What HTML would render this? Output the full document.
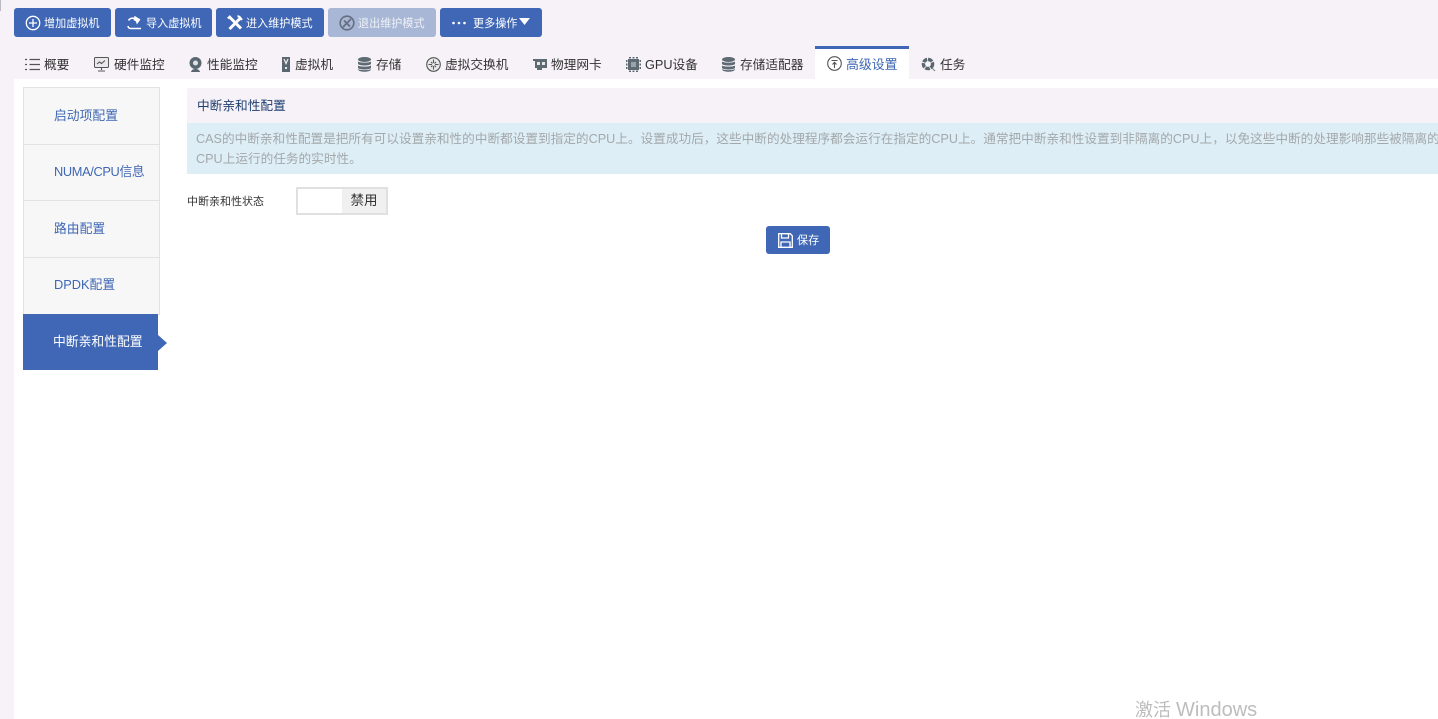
<!DOCTYPE html>
<html lang="zh"><head><meta charset="utf-8"><title>高级设置</title>
<style>
*{box-sizing:border-box}
html{margin:0;padding:0;width:1438px;height:719px;overflow:hidden;background:#fff}
body{margin:0;padding:0;position:relative;width:1438px;height:719px;overflow:hidden;background:#f6f2f7;font:12px/16px "Liberation Sans","Noto Sans CJK SC",sans-serif;color:#333}
.a{position:absolute;white-space:nowrap}
.btn{position:absolute;top:8px;height:29px;background:#3f67b5;border-radius:3px}
.btn span{position:absolute;top:8px;color:#fff;font-size:11.1px;line-height:16px;white-space:nowrap}
svg{position:absolute;overflow:visible}
.tab{position:absolute;top:57px;font-size:12.7px;line-height:17px;color:#333;white-space:nowrap}
.nav{position:absolute;left:23px;width:137px;background:#f7f7f7;border:1px solid #e3e3e3;color:#3f67b5;font-size:12.8px}
.nav span{position:absolute;left:30px;white-space:nowrap}
</style></head><body>
<div class="a" style="left:0;top:0;width:1px;height:11px;background:#b9b9c4"></div>

<div class="btn" style="left:14px;width:97px">
<svg style="left:11px;top:7px" width="16" height="16" viewBox="0 0 16 16" fill="none" stroke="#fff" stroke-width="1.3"><circle cx="8" cy="8" r="6.7"/><path d="M8 4v8M4 8h8"/></svg>
<span style="left:30px">增加虚拟机</span></div>
<div class="btn" style="left:115px;width:97px">
<svg style="left:12px;top:7px" width="16" height="16" viewBox="0 0 16 16" fill="none" stroke="#fff" stroke-width="1.6"><path d="M1 11c.4 1.800 1 2.500 2.500 2.500H14"/><path d="M1.500 5.500C3 3 6 2.500 8.500 4"/><path d="M7.500 .8l6 3.700-3.700 5-.8-3L6.500 5z" fill="#fff" stroke="none"/></svg>
<span style="left:31px">导入虚拟机</span></div>
<div class="btn" style="left:216px;width:108px">
<svg style="left:11px;top:7px" width="16" height="16" viewBox="0 0 16 16" fill="none" stroke="#fff"><path d="M2.500 14L13 3.500" stroke-width="3"/><path d="M3 2.500L14 13.500" stroke-width="3"/><path d="M.8 3.500L3.500.8" stroke-width="2"/><path d="M10.500 1.200c1.500 0 3.800 2 4 4" stroke-width="2.200"/></svg>
<span style="left:30px">进入维护模式</span></div>
<div class="btn" style="left:328px;width:108px;background:#a8b7d6">
<svg style="left:11px;top:7px" width="16" height="16" viewBox="0 0 16 16" fill="none" stroke="#666f80"><circle cx="8" cy="8" r="6.800" stroke-width="1.600"/><path d="M4 12L12 4M5 5.500l6 6" stroke-width="1.800"/></svg>
<span style="left:30px;color:#eef1f7">退出维护模式</span></div>
<div class="btn" style="left:440px;width:102px">
<svg style="left:11px;top:7px" width="16" height="16" viewBox="0 0 16 16" fill="#fff"><circle cx="2.500" cy="8" r="1.300"/><circle cx="8" cy="8" r="1.300"/><circle cx="13.500" cy="8" r="1.300"/></svg>
<span style="left:33px">更多操作</span>
<svg style="left:79px;top:10px" width="11" height="7" viewBox="0 0 11 7" fill="#fff"><path d="M0 0h11L5.500 7z"/></svg></div>

<svg style="left:25px;top:58px" width="15" height="13" viewBox="0 0 15 13" fill="none" stroke="#555" stroke-width="1.200"><path d="M0 1.500h2M4.500 1.500H15M0 6.500h2M4.500 6.500H15M0 11.500h2M4.500 11.500H15"/></svg>
<div class="tab" style="left:44px">概要</div>
<svg style="left:94px;top:57px" width="15" height="15" viewBox="0 0 15 15" fill="none" stroke="#555"><rect x=".5" y=".5" width="14" height="10" rx="1" fill="#e9e9ec"/><path d="M3 7l2.500-2 2 1.500L11 3.500M7.500 11v2M4 14h7" stroke-width="1.100"/></svg>
<div class="tab" style="left:114px">硬件监控</div>
<svg style="left:189px;top:57px" width="13" height="15" viewBox="0 0 13 15"><circle cx="6.500" cy="6" r="6" fill="#5a6670"/><circle cx="6.500" cy="6" r="2.500" fill="#dfe3e6"/><path d="M2 15c.5-2 2-3 4.500-3S10.500 13 11 15z" fill="#5a6670"/></svg>
<div class="tab" style="left:207px">性能监控</div>
<svg style="left:282px;top:57px" width="8" height="15" viewBox="0 0 8 15"><rect width="8" height="15" fill="#5a6670"/><path d="M2 2l2 4.500L6 2" fill="none" stroke="#e8e8e8" stroke-width="1.300"/><rect x="3" y="10" width="2" height="2" fill="#e8e8e8"/></svg>
<div class="tab" style="left:295px">虚拟机</div>
<svg style="left:358px;top:57px" width="13" height="15" viewBox="0 0 13 15" fill="#5f6b73"><ellipse cx="6.500" cy="2.500" rx="6.500" ry="2.500"/><path d="M0 4.500c1.500 1.500 11.500 1.500 13 0v2.500c-1.500 2-11.500 2-13 0zM0 8.500c1.500 1.500 11.500 1.500 13 0V11c-1.500 2-11.500 2-13 0zM0 12c1.500 1.500 11.500 1.500 13 0v.5c-1 3-12 3-13 0z"/></svg>
<div class="tab" style="left:376px">存储</div>
<svg style="left:426px;top:57px" width="15" height="15" viewBox="0 0 15 15" fill="none" stroke="#555" stroke-width="1.100"><circle cx="7.500" cy="7.500" r="6.800" fill="#e9e9ec"/><path d="M7.500 2.500v3.500M7.500 9v3.500M2.500 7.500H6M9 7.500h3.500M5 5l1.500 1.500M10 5L8.500 6.500M5 10l1.500-1.500M10 10L8.500 8.500"/></svg>
<div class="tab" style="left:445px">虚拟交换机</div>
<svg style="left:533px;top:59px" width="14" height="11" viewBox="0 0 14 11"><path d="M0 0h14v9H9v2H4V9H2V2H0z" fill="#5f6b73"/><rect x="4" y="3" width="3" height="3" fill="#e8e8e8"/><rect x="9" y="3" width="3" height="3" fill="#e8e8e8"/></svg>
<div class="tab" style="left:551px">物理网卡</div>
<svg style="left:626px;top:57px" width="15" height="15" viewBox="0 0 15 15" fill="#5f6b73"><rect x="2" y="2" width="11" height="11"/><rect x="5" y="5" width="5" height="5" fill="#9aa3aa"/><path d="M3 0h2v1.500H3zM6.500 0h2v1.500h-2zM10 0h2v1.500h-2zM3 13.500h2V15H3zM6.500 13.500h2V15h-2zM10 13.500h2V15h-2zM0 3h1.500v2H0zM0 6.500h1.500v2H0zM0 10h1.500v2H0zM13.500 3H15v2h-1.500zM13.500 6.500H15v2h-1.500zM13.500 10H15v2h-1.500z"/></svg>
<div class="tab" style="left:645px">GPU设备</div>
<svg style="left:722px;top:57px" width="13" height="15" viewBox="0 0 13 15" fill="#5f6b73"><ellipse cx="6.500" cy="2.500" rx="6.500" ry="2.500"/><path d="M0 4.500c1.500 1.500 11.500 1.500 13 0v2.500c-1.500 2-11.500 2-13 0zM0 8.500c1.500 1.500 11.500 1.500 13 0V11c-1.500 2-11.500 2-13 0zM0 12c1.500 1.500 11.500 1.500 13 0v.5c-1 3-12 3-13 0z"/></svg>
<div class="tab" style="left:740px">存储适配器</div>

<div class="a" style="left:815px;top:46px;width:94px;height:34px;background:#fff;border-top:3px solid #3f67b5"></div>
<svg style="left:827px;top:56px" width="15" height="15" viewBox="0 0 15 15" fill="none" stroke="#555" stroke-width="1.100"><circle cx="7.500" cy="7.500" r="6.800"/><path d="M4.500 4.500h6M7.500 12V6.500M5.500 8.500l2-2.200 2 2.200"/></svg>
<div class="tab" style="left:846px;top:56px;color:#3f67b5;font-size:12.900px">高级设置</div>
<svg style="left:921px;top:57px" width="15" height="15" viewBox="0 0 15 15" fill="none"><circle cx="7" cy="7" r="4.600" stroke="#5a6670" stroke-width="3.400" stroke-dasharray="4.500 .9"/><path d="M11.500 11.500l2.500 2.500" stroke="#888" stroke-width="1.200"/></svg>
<div class="tab" style="left:940px">任务</div>

<div class="a" style="left:14px;top:79px;width:1424px;height:640px;background:#fff"></div>

<div class="nav" style="top:87px;height:58px"><span style="top:20px">启动项配置</span></div>
<div class="nav" style="top:144px;height:57px"><span style="top:19px;letter-spacing:-.35px">NUMA/CPU信息</span></div>
<div class="nav" style="top:200px;height:58px"><span style="top:20px">路由配置</span></div>
<div class="nav" style="top:257px;height:58px"><span style="top:19px">DPDK配置</span></div>
<div class="a" style="left:23px;top:314px;width:135px;height:56px;background:#3f67b5"><span class="a" style="left:30px;top:20px;color:#fff;font-size:12.800px">中断亲和性配置</span></div>
<div class="a" style="left:158px;top:335px;width:0;height:0;border-left:9px solid #3f67b5;border-top:8px solid transparent;border-bottom:8px solid transparent"></div>

<div class="a" style="left:187px;top:88px;width:1251px;height:35px;background:#f6f2f7;border-radius:2px 0 0 0"></div>
<div class="a" style="left:197px;top:98px;color:#1f3f70;font-size:12.700px">中断亲和性配置</div>
<div class="a" style="left:187px;top:123px;width:1251px;height:51px;background:#deeef6;overflow:hidden;color:#a3a8ab;font-size:12.650px;line-height:21px">
<div class="a" style="left:9px;top:6px">CAS的中断亲和性配置是把所有可以设置亲和性的中断都设置到指定的CPU上。设置成功后，这些中断的处理程序都会运行在指定的CPU上。通常把中断亲和性设置到非隔离的CPU上，以免这些中断的处理影响那些被隔离的</div>
<div class="a" style="left:9px;top:26px">CPU上运行的任务的实时性。</div></div>

<div class="a" style="left:187px;top:194px;font-size:11px">中断亲和性状态</div>
<div class="a" style="left:296px;top:187px;width:92px;height:28px;background:#fff;border:2px solid #e0e0e0"></div>
<div class="a" style="left:342px;top:189px;width:44px;height:24px;background:#f0f0f0;text-align:center;line-height:24px;color:#333;font-size:13.500px">禁用</div>

<div class="a" style="left:766px;top:226px;width:64px;height:28px;background:#3f67b5;border-radius:3px"></div>
<svg style="left:778px;top:233px" width="15" height="15" viewBox="0 0 15 15" fill="none" stroke="#fff" stroke-width="1.300"><path d="M.7.700h11.500l2.100 2.100v11.500H.700z"/><path d="M3.500 1v4h7V1M3 14V9h9v5"/></svg>
<div class="a" style="left:797px;top:233px;color:#fff;font-size:11.100px">保存</div>

<div class="a" style="left:1135px;top:698px;color:#bdbdbd;font-size:18px;line-height:24px">激活 <span style="font-size:20px">Windows</span></div>
</body></html>
